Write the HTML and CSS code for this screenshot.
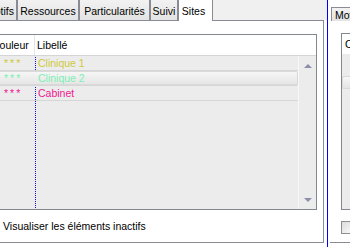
FILE: index.html
```html
<!DOCTYPE html>
<html lang="fr">
<head>
<meta charset="utf-8">
<link rel="stylesheet" href="styles.css">
</head>
<body>
<div class="window">
  <div class="left">
    <div class="tabs">
      <div class="tab t-motifs">Motifs</div>
      <div class="tab t-res">Ressources</div>
      <div class="tab t-part">Particularités</div>
      <div class="tab t-suivi">Suivi</div>
      <div class="tab active t-sites">Sites</div>
    </div>
    <div class="page">
      <div class="list">
        <div class="head">
          <div class="hcell c1">Couleur</div>
          <div class="hcell c2">Libellé</div>
        </div>
        <div class="bodywrap">
          <div class="rows">
            <div class="row r-c1"><span class="c1">***</span><span class="c2">Clinique 1</span></div>
            <div class="row r-c2 selected"><span class="c1">***</span><span class="c2">Clinique 2</span></div>
            <div class="row r-cab"><span class="c1">***</span><span class="c2">Cabinet</span></div>
          </div>
          <div class="scroll">
            <span class="arrow up"></span>
            <span class="arrow down"></span>
          </div>
        </div>
      </div>
      <div class="check"><span class="box"></span><span>Visualiser les éléments inactifs</span></div>
    </div>
  </div>
  <div class="splitter"></div>
  <div class="right">
    <div class="rtabs"><div class="rtab">Motifs</div></div>
    <div class="rpage">
      <div class="rlist">
        <div class="rhead">Couleur</div>
        <div class="rsel"></div>
      </div>
      <div class="rcheck"><span class="box"></span></div>
    </div>
  </div>
</div>
</body>
</html>
```
FILE: styles.css
```css
html, body {
  margin: 0;
  padding: 0;
  width: 350px;
  height: 247px;
  overflow: hidden;
  background: #ffffff;
  font-family: "Liberation Sans", Arial, sans-serif;
  font-size: 10.5px;
  color: #000;
}

.window {
  display: flex;
  height: 247px;
}

/* ---------- left tab control ---------- */
.left {
  flex: none;
  width: 357px;
  margin-left: -30px;
  display: flex;
  flex-direction: column;
}

.tabs {
  height: 20px;
  background: #f0f0f0;
  display: flex;
  align-items: flex-end;
  position: relative;
  z-index: 1;
}

.tab {
  box-sizing: border-box;
  height: 21px;
  padding-top: 2px;
  border: 1px solid #898c95;
  border-bottom: none;
  background: linear-gradient(#f2f2f2, #e3e3e3);
  display: flex;
  align-items: center;
  justify-content: center;
  white-space: nowrap;
  flex: none;
}
.t-motifs { width: 47px; justify-content: flex-end; padding-right: 2px; }
.t-res { width: 62px; }
.t-part { width: 71px; }
.t-suivi { width: 28px; }
.t-sites { width: 35px; }

.tab.active {
  height: 22px;
  margin-bottom: -1px;
  padding-top: 0;
  background: #ffffff;
  padding-right: 4px;
}

.page {
  box-sizing: border-box;
  flex: none;
  height: 223px;
  border: 1px solid #898c95;
  border-left: none;
  margin-right: 3px;
  background: #ffffff;
  padding: 13px 6px 0 18px;
  display: flex;
  flex-direction: column;
}

.list {
  box-sizing: border-box;
  height: 176px;
  border: 1px solid #828790;
  background: #ececec;
  display: flex;
  flex-direction: column;
}

.head {
  height: 20px;
  background: #ffffff;
  border-bottom: 1px solid #d5d5d5;
  display: flex;
  align-items: center;
}

.hcell.c1 {
  width: 46px;
  padding-left: 3px;
  box-sizing: border-box;
  border-right: 1px solid #e5e5e5;
  height: 100%;
  display: flex;
  align-items: center;
}
.hcell.c2 {
  padding-left: 2px;
}

.bodywrap {
  flex: 1;
  display: flex;
}

.rows {
  flex: 1;
  background:
    repeating-linear-gradient(#1010d0 0 1px, transparent 1px 2px) 46px 1px / 1px calc(100% - 1px) no-repeat,
    #ececec;
}

.row {
  box-sizing: border-box;
  height: 15px;
  border-bottom: 1px solid #d6d6d6;
  display: flex;
  align-items: center;
}
.row .c1 {
  width: 47px;
  box-sizing: border-box;
  padding-left: 15px;
  letter-spacing: 2px;
}
.row .c2 {
  padding-left: 2px;
}

.row.selected {
  background: linear-gradient(#f7f7f7, #e4e4e4);
  box-shadow: inset 0 0 0 1px #d9d9d9;
  border-radius: 2px;
}

.r-c1 { color: #cfc93c; }
.r-c2 { color: #7cf0b4; }
.r-cab { color: #f01890; }

.scroll {
  box-sizing: border-box;
  width: 18px;
  flex: none;
  background: #ececec;
  border-left: 1px solid #f8f8f8;
  display: flex;
  flex-direction: column;
  justify-content: space-between;
  align-items: center;
  padding: 8px 0 7px;
}

.arrow {
  width: 0;
  height: 0;
  border-left: 4px solid transparent;
  border-right: 4px solid transparent;
}
.arrow.up { border-bottom: 4px solid #8e8eaa; }
.arrow.down { border-top: 4px solid #8e8eaa; }

.check {
  display: flex;
  align-items: center;
  gap: 4px;
  margin-top: 9px;
  margin-left: -2px;
}

.box {
  box-sizing: border-box;
  width: 13px;
  height: 13px;
  border: 1px solid #8f8f8f;
  background: linear-gradient(135deg, #dcdcdc, #fbfbfb);
  flex: none;
}

/* ---------- splitter ---------- */
.splitter {
  flex: none;
  width: 1px;
  background: #0000ff;
}

/* ---------- right tab control ---------- */
.right {
  flex: 1;
  display: flex;
  flex-direction: column;
  background: #ffffff;
}

.rtabs {
  height: 21px;
  display: flex;
  align-items: flex-end;
  padding-left: 3px;
}
.rtab {
  box-sizing: border-box;
  height: 14px;
  padding: 0 3px;
  border: 1px solid #898c95;
  border-bottom: none;
  background: linear-gradient(#f2f2f2, #e3e3e3);
  display: flex;
  align-items: center;
  white-space: nowrap;
}

.rpage {
  box-sizing: border-box;
  height: 222px;
  border-bottom: 1px solid #898c95;
  margin-left: 2px;
  padding: 12px 0 0 11px;
}

.rlist {
  box-sizing: border-box;
  height: 177px;
  border: 1px solid #828790;
  border-right: none;
  background: #ececec;
}
.rhead {
  height: 20px;
  background: #fff;
  padding-left: 3px;
  display: flex;
  align-items: center;
  white-space: nowrap;
  overflow: hidden;
}
.rsel {
  margin-top: 22px;
  height: 11px;
  background: linear-gradient(#f7f7f7, #e4e4e4);
  border: 1px solid #d9d9d9;
  border-right: none;
  border-radius: 2px 0 0 2px;
}

.rcheck {
  margin-top: 11px;
  display: flex;
}
```
